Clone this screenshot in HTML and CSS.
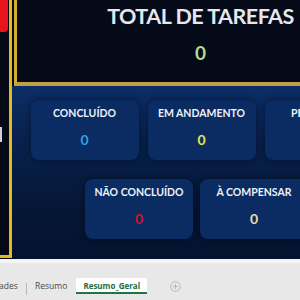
FILE: index.html
```html
<!DOCTYPE html>
<html lang="pt">
<head>
<meta charset="utf-8">
<link rel="stylesheet" href="styles.css">
</head>
<body>
<div class="sheet">
  <div class="dash">
    <aside class="side">
      <div class="side-red"></div>
      <div class="side-mark"></div>
    </aside>
    <main class="main">
      <header class="head">
        <h1 class="head-title">TOTAL DE TAREFAS</h1>
        <div class="head-value">0</div>
      </header>
      <section class="content">
        <div class="row row-top">
          <div class="card"><div class="card-title">CONCLUÍDO</div><div class="card-value v-blue">0</div></div>
          <div class="card"><div class="card-title">EM ANDAMENTO</div><div class="card-value v-yellow">0</div></div>
          <div class="card"><div class="card-title">PENDENTE</div><div class="card-value v-orange">0</div></div>
        </div>
        <div class="row row-bottom">
          <div class="card"><div class="card-title">NÃO CONCLUÍDO</div><div class="card-value v-red">0</div></div>
          <div class="card"><div class="card-title">À COMPENSAR</div><div class="card-value v-cream">0</div></div>
        </div>
      </section>
    </main>
  </div>
  <footer class="tabs">
    <div class="tab-strip"></div>
    <div class="tab-row">
      <span class="tab tab-cut">ades</span>
      <span class="tab-sep"></span>
      <span class="tab">Resumo</span>
      <span class="tab tab-active">Resumo_Geral</span>
      <span class="tab-add">
        <svg width="11" height="11" viewBox="0 0 11 11"><circle cx="5.5" cy="5.5" r="4.8" fill="none" stroke="#b4b4b4" stroke-width="0.9"/><path d="M5.5 3v5M3 5.5h5" stroke="#b4b4b4" stroke-width="0.9"/></svg>
      </span>
    </div>
  </footer>
</div>
</body>
</html>
```
FILE: styles.css
```css
html, body {
  margin: 0;
  padding: 0;
  width: 300px;
  height: 300px;
  overflow: hidden;
  background: #e8e8e8;
}
.sheet {
  width: 300px;
  height: 300px;
  display: flex;
  flex-direction: column;
  overflow: hidden;
  font-family: Lato, "Open Sans", sans-serif;
}
.dash {
  height: 259px;
  flex: none;
  display: flex;
  background: #050a18;
  overflow: hidden;
}
.side {
  width: 9px;
  height: 255px;
  flex: none;
  border-right: 3px solid #e2b927;
  border-bottom: 3px solid #e2b927;
  display: flex;
  flex-direction: column;
  background: #040915;
}
.side-red {
  width: 8px;
  height: 32px;
  background: #e8131b;
  border-bottom-right-radius: 4px;
}
.side-mark {
  width: 2px;
  height: 15px;
  margin-top: 95px;
  background: #c9d2e2;
}
.main {
  width: 372px;
  flex: none;
  display: flex;
  flex-direction: column;
}
.head {
  height: 79px;
  margin-left: 2px;
  border-left: 3px solid #d3ad33;
  border-bottom: 4px solid #bea046;
  background: #050a19;
  display: flex;
  flex-direction: column;
  align-items: center;
  padding-top: 3px;
}
.head-title {
  margin: 0;
  font-size: 21.5px;
  line-height: 26px;
  font-weight: 700;
  color: #e4e7ec;
  letter-spacing: -0.5px;
  white-space: nowrap;
}
.head-value {
  margin-top: 13px;
  font-size: 19px;
  line-height: 22px;
  font-weight: 700;
  color: #b6d98e;
}
.content {
  flex: 1;
  background: linear-gradient(180deg, #0c2d66 0%, #08214f 30%, #051735 70%, #041230 100%);
  display: flex;
  flex-direction: column;
  padding-top: 14px;
  gap: 19px;
}
.row {
  display: flex;
}
.row-top {
  padding-left: 18.5px;
  gap: 9px;
}
.row-bottom {
  padding-left: 73px;
  gap: 7px;
}
.card {
  width: 108px;
  height: 60px;
  flex: none;
  box-sizing: border-box;
  border-radius: 8px;
  background: #0b2b63;
  box-shadow: 0 0 6px rgba(0, 0, 0, 0.45);
  display: flex;
  flex-direction: column;
  align-items: center;
  padding-top: 6px;
}
.card-title {
  font-size: 10.5px;
  line-height: 14px;
  font-weight: 700;
  color: #eef1f6;
  white-space: nowrap;
}
.card-value {
  margin-top: 12px;
  font-size: 14px;
  line-height: 16px;
  font-weight: 700;
}
.v-blue { color: #2f9fe6; }
.v-yellow { color: #e6e84c; }
.v-orange { color: #f0a030; }
.v-red { color: #cf132b; }
.v-cream { color: #ebdca2; }
.tabs {
  flex: 1;
  display: flex;
  flex-direction: column;
  background: #e8e8e8;
}
.tab-strip {
  height: 4px;
  background: #f4f4f4;
}
.tab-row {
  margin-top: 15px;
  height: 16px;
  display: flex;
  align-items: center;
  font-family: "Open Sans", sans-serif;
  font-size: 8.5px;
  color: #4a4a4a;
}
.tab {
  line-height: 16px;
  white-space: nowrap;
}
.tab-cut {
  margin-left: -1px;
  width: 27px;
}
.tab-sep {
  width: 1px;
  height: 12px;
  background: #b8b8b8;
  margin-top: 6px;
}
.tab-sep + .tab {
  margin-left: 8px;
}
.tab-active {
  margin-left: 9px;
  width: 71px;
  height: 16px;
  box-sizing: border-box;
  background: #ffffff;
  border-bottom: 2px solid #217346;
  color: #1d6e43;
  font-weight: 700;
  font-size: 8px;
  text-align: center;
  line-height: 15px;
}
.tab-add {
  margin-left: 23px;
  display: flex;
}
```
